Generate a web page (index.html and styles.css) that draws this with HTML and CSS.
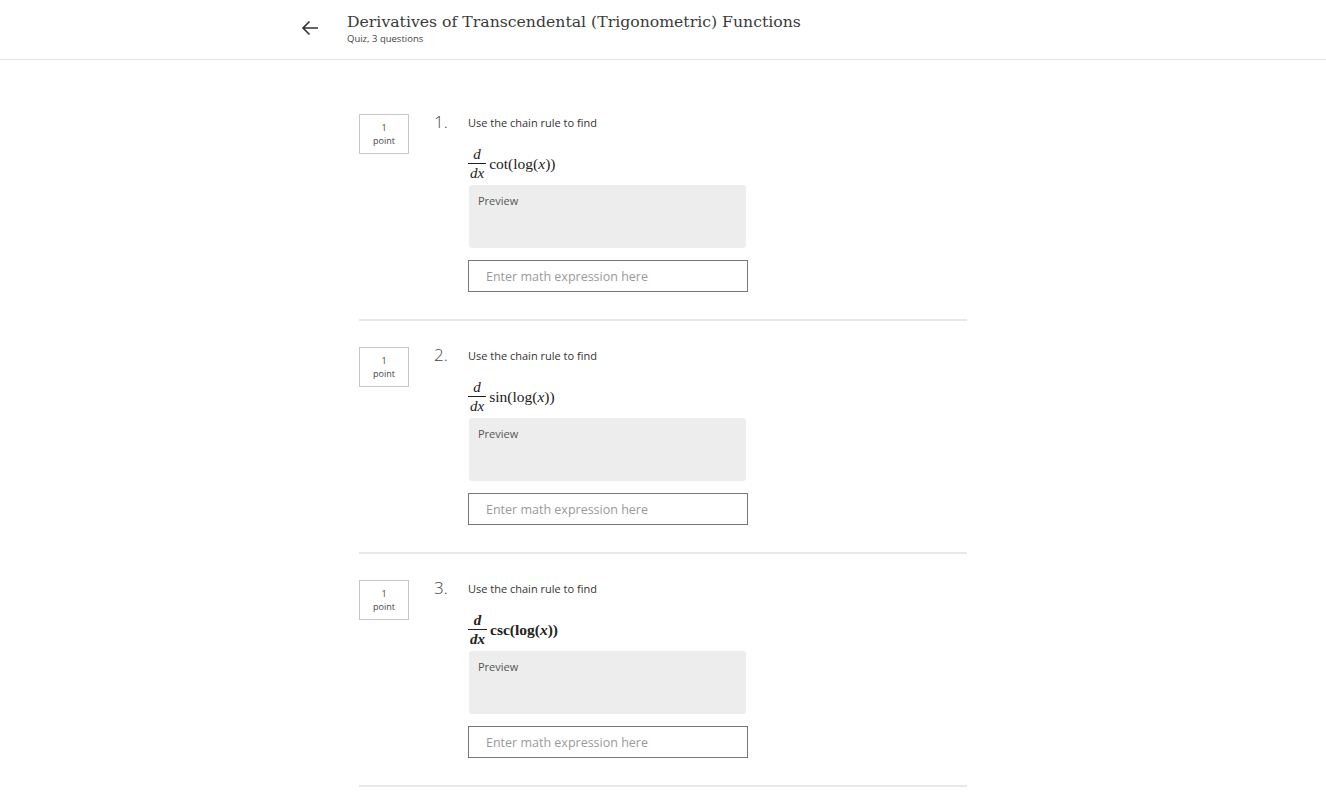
FILE: index.html
```html
<!DOCTYPE html>
<html>
<head>
<meta charset="utf-8">
<link rel="stylesheet" href="styles.css">
</head>
<body>
<header class="header">
  <div class="header-inner">
    <button class="back" aria-label="Back">
      <svg width="18" height="16" viewBox="0 0 18 16"><path d="M17 8H2M8.5 1.5L2 8l6.5 6.5" fill="none" stroke="#333" stroke-width="1.6"/></svg>
    </button>
    <div class="titles">
      <h1 class="title">Derivatives of Transcendental (Trigonometric) Functions</h1>
      <div class="subtitle">Quiz, 3 questions</div>
    </div>
  </div>
</header>
<main class="quiz">
  <section class="question">
    <div class="points"><span>1</span><span>point</span></div>
    <div class="num">1.</div>
    <div class="body">
      <p class="prompt">Use the chain rule to find</p>
      <div class="math"><span class="frac"><span class="top">d</span><span class="bot">dx</span></span><span class="expr">cot(log(<i>x</i>))</span></div>
      <div class="preview">Preview</div>
      <input class="answer" type="text" placeholder="Enter math expression here">
    </div>
  </section>
  <section class="question">
    <div class="points"><span>1</span><span>point</span></div>
    <div class="num">2.</div>
    <div class="body">
      <p class="prompt">Use the chain rule to find</p>
      <div class="math"><span class="frac"><span class="top">d</span><span class="bot">dx</span></span><span class="expr">sin(log(<i>x</i>))</span></div>
      <div class="preview">Preview</div>
      <input class="answer" type="text" placeholder="Enter math expression here">
    </div>
  </section>
  <section class="question">
    <div class="points"><span>1</span><span>point</span></div>
    <div class="num">3.</div>
    <div class="body">
      <p class="prompt">Use the chain rule to find</p>
      <div class="math bold"><span class="frac"><span class="top">d</span><span class="bot">dx</span></span><span class="expr">csc(log(<i>x</i>))</span></div>
      <div class="preview">Preview</div>
      <input class="answer" type="text" placeholder="Enter math expression here">
    </div>
  </section>
</main>
</body>
</html>
```
FILE: styles.css
```css
* { box-sizing: border-box; }
html, body { margin: 0; padding: 0; background: #fff; }
body { font-family: "Open Sans", "Liberation Sans", sans-serif; color: #333; }

.header { border-bottom: 1px solid #e4e4e4; height: 60px; }
.header-inner { display: flex; align-items: flex-start; padding-left: 301px; }
.back { border: 0; background: none; padding: 0; margin-top: 20px; width: 18px; height: 16px; cursor: pointer; display: block; }
.back svg { display: block; }
.titles { margin-left: 28px; padding-top: 11px; }
.title { margin: 0; font-family: "DejaVu Serif", "Liberation Serif", serif; font-weight: 400; font-size: 15.7px; line-height: 21px; color: #3a3a3a; letter-spacing: 0; }
.subtitle { font-size: 9.5px; line-height: 12px; color: #444; margin-top: 1px; }

.quiz { width: 608px; margin-left: 359px; padding-top: 54px; }
.question { display: flex; align-items: flex-start; padding: 0 0 27px; border-bottom: 2px solid #e8e8e8; margin-bottom: 26px; }
.points { width: 50px; height: 40px; border: 1px solid #c8c8c8; display: flex; flex-direction: column; align-items: center; justify-content: center; font-size: 9px; line-height: 13px; color: #444; }
.num { width: 34px; margin-left: 25px; font-size: 17px; font-weight: 300; line-height: 18px; color: #444; margin-top: -1px; }
.body { width: 280px; }
.prompt { margin: 2px 0 0; font-size: 11px; line-height: 14px; color: #333; }
.math { display: flex; align-items: center; height: 36px; margin-top: 15px; font-family: "Liberation Serif", "DejaVu Serif", serif; color: #222; }
.frac { display: inline-flex; flex-direction: column; align-items: center; font-style: italic; font-size: 15px; line-height: 16px; }
.frac .top { padding: 0 3px 1px; }
.frac .bot { border-top: 1px solid #222; padding: 1px 2px 0; }
.expr { font-size: 15.5px; margin-left: 3px; margin-top: 1px; }
.math.bold { font-weight: 700; }
.preview { margin-top: 4px; margin-left: 1px; width: 277px; height: 63px; background: #ededed; border-radius: 3px; padding: 9px 9px; font-size: 11px; line-height: 14px; color: #555; }
.answer { display: block; margin-top: 12px; width: 280px; height: 32px; border: 1px solid #777; border-radius: 0; padding: 0 17px; font-family: "Open Sans", sans-serif; font-size: 12.5px; color: #333; background: #fff; outline: none; }
.answer::placeholder { color: #9a9a9a; }
```
